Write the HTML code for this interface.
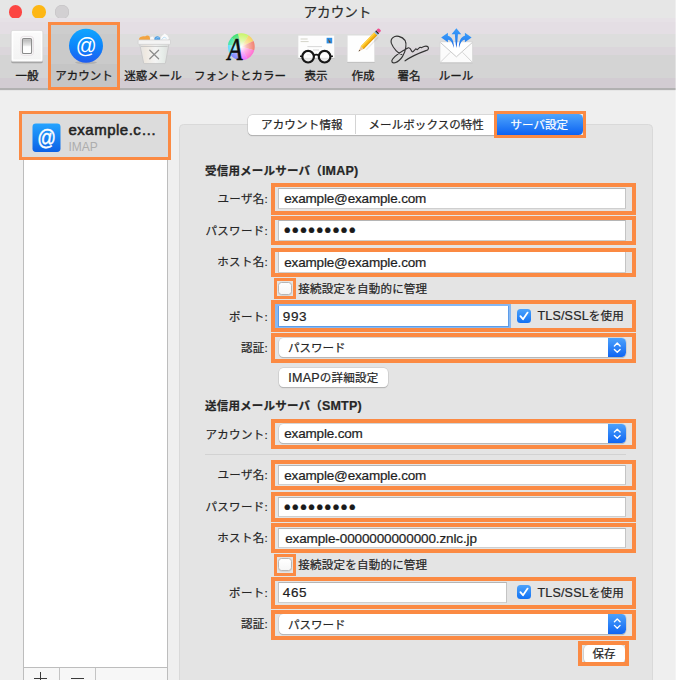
<!DOCTYPE html>
<html lang="ja">
<head>
<meta charset="utf-8">
<title>アカウント</title>
<style>
html,body{margin:0;padding:0}
body{width:676px;height:680px;position:relative;overflow:hidden;background:#efefef;
 font-family:"Liberation Sans","Noto Sans CJK JP",sans-serif;font-size:11.5px;color:#262626;-webkit-text-stroke:.22px}
.a{position:absolute;box-sizing:border-box}
.t{position:absolute;white-space:nowrap;line-height:16px;height:16px}
.l{font-size:12.5px}
.or{position:absolute;box-sizing:border-box;border:4px solid #fb8a43}
.fld{position:absolute;box-sizing:border-box;background:#fff;border:1px solid #c4c4c4;border-top-color:#b5b5b5;border-bottom-color:#cfcfcf;height:22px}
.ft{position:absolute;white-space:nowrap;font-size:13.5px;line-height:20px;left:5.7px;top:.9px;color:#1e1e1e;letter-spacing:-.16px}
.dots{position:absolute;white-space:nowrap;font-size:20px;line-height:19px;left:5.2px;top:0;color:#1a1a1a;letter-spacing:1.12px}
.lab{position:absolute;white-space:nowrap;line-height:16px;height:16px;text-align:right;width:100px;left:168px;letter-spacing:.3px}
.pop{position:absolute;box-sizing:border-box;background:#fff;border-radius:4.5px;height:20px;box-shadow:0 0 0 .5px #c6c6c6,0 1px 1px rgba(0,0,0,.28)}
.step{position:absolute;right:0;top:0;width:18.5px;height:100%;border-radius:0 4.5px 4.5px 0;background:linear-gradient(#4da2fb,#0f65f3)}
.cb{position:absolute;box-sizing:border-box;width:14px;height:13px;border-radius:3.5px;background:linear-gradient(#fff,#f6f6f6);border:1px solid #b6b6b6;box-shadow:0 .5px .5px rgba(0,0,0,.12)}
.cbon{position:absolute;box-sizing:border-box;width:14px;height:14px;border-radius:3.5px;background:linear-gradient(#4ca3fb,#1171f4)}
.btn{position:absolute;box-sizing:border-box;background:#fff;border-radius:4.5px;box-shadow:0 0 0 .5px #c4c4c4,0 1px 1px rgba(0,0,0,.28)}
.tl{position:absolute;top:5px;width:13.5px;height:13.5px;border-radius:50%}
.tbl{position:absolute;white-space:nowrap;line-height:16px;height:16px;top:68px;text-align:center;color:#1c1c1c;-webkit-text-stroke:.3px}
</style>
</head>
<body>

<!-- title bar -->
<div class="a" style="left:0;top:0;width:676px;height:22px;background:#e6e6e6"></div>
<div class="tl" style="left:8.5px;background:#fc4643"></div>
<div class="tl" style="left:32px;background:#fdb714"></div>
<div class="tl" style="left:55.2px;background:#d2d0d2;box-shadow:inset 0 0 0 .5px #c2c0c2"></div>
<div class="t" style="left:303.5px;top:3.6px;font-size:13.6px;line-height:18px;height:18px;color:#2b2b2b">アカウント</div>

<!-- toolbar -->
<div class="a" style="left:0;top:17.5px;width:676px;height:70px;background:linear-gradient(#e6e1e6 0,#e6e1e6 3.5px,#e4dee4 3.5px,#e4dee4 15.5px,#dddddd 15.5px,#dddddd 29.5px,#dbd6db 29.5px,#dbd6db 37.5px,#d4d4d4 37.5px,#d4d4d4 60.5px,#d2ccd2 60.5px,#d2ccd2 70px)"></div>
<div class="a" style="left:0;top:87.5px;width:676px;height:2px;background:#b1b1b1"></div>
<div class="a" style="left:0;top:89.5px;width:676px;height:1px;background:#e6e6e6"></div>

<!-- selected toolbar item -->
<div class="a" style="left:50px;top:24px;width:68px;height:64px;background:linear-gradient(#cdcdcd 0,#cdcdcd 10px,#cacaca 10px,#cacaca 40px,#c5c5c5 40px,#c5c5c5 64px)"></div>

<!-- icon: general -->
<svg class="a" style="left:9px;top:28px" width="37" height="38" viewBox="0 0 37 38">
 <defs>
  <linearGradient id="g1" x1="0" y1="0" x2="0" y2="1"><stop offset="0" stop-color="#fbfbfb"/><stop offset="1" stop-color="#f3f3f3"/></linearGradient>
  <linearGradient id="g1b" x1="0" y1="0" x2="0" y2="1"><stop offset="0" stop-color="#f4f4f4"/><stop offset=".08" stop-color="#b9b9b9"/><stop offset=".45" stop-color="#e6e6e6"/><stop offset=".55" stop-color="#fdfdfd"/><stop offset="1" stop-color="#ffffff"/></linearGradient>
 </defs>
 <rect x="2.1" y="3.6" width="31.8" height="31.6" rx="1.6" fill="#8f8f8f" opacity=".7"/>
 <rect x="2.1" y="2.4" width="31.8" height="31.2" rx="1.6" fill="url(#g1)" stroke="#d6d6d6" stroke-width=".7"/>
 <rect x="3.6" y="3.9" width="28.8" height="28.2" rx=".8" fill="none" stroke="#ffffff" stroke-width="1.4"/>
 <rect x="11.7" y="8.4" width="12.8" height="18.9" rx="2.8" fill="#fbfbfb" stroke="#e3dbe0" stroke-width=".8"/>
 <rect x="13.4" y="10.5" width="9.2" height="15" rx="1.3" fill="url(#g1b)" stroke="#8a8a8a" stroke-width="1.1"/>
</svg>
<div class="tbl" style="left:7px;width:40px">一般</div>

<!-- icon: account -->
<svg class="a" style="left:66px;top:26px" width="40" height="40" viewBox="0 0 40 40">
 <defs>
  <linearGradient id="g2" x1="0" y1="0" x2="0" y2="1"><stop offset="0" stop-color="#10a6ff"/><stop offset=".5" stop-color="#0c86fb"/><stop offset="1" stop-color="#1f5cf0"/></linearGradient>
 </defs>
 <ellipse cx="20" cy="36.6" rx="11" ry="1.6" fill="#000" opacity=".12"/>
 <circle cx="20" cy="19.8" r="17" fill="url(#g2)"/>
 <text transform="translate(20.2,26.6) scale(.92,1)" x="0" y="0" text-anchor="middle" font-family="Liberation Sans, sans-serif" font-size="22.5" fill="#fff">@</text>
</svg>
<div class="tbl" style="left:54px;width:60px">アカウント</div>

<!-- icon: junk -->
<svg class="a" style="left:134px;top:28px" width="40" height="38" viewBox="0 0 40 38">
 <defs>
  <linearGradient id="g3" x1="0" y1="0" x2="1" y2="0"><stop offset="0" stop-color="#e3e3e3"/><stop offset=".2" stop-color="#efe9e1"/><stop offset=".55" stop-color="#f4f4f4"/><stop offset=".8" stop-color="#e6ece8"/><stop offset="1" stop-color="#dedede"/></linearGradient>
 </defs>
 <path d="M5 11.9 C5 9 8 8.2 11 8.4 C12.5 7.2 14.5 7.2 15.6 8.6 L16.2 12 Z" fill="#f3a440"/>
 <path d="M15.8 12 L16.6 9 L19 8.6 L20.6 12 Z" fill="#fafafa"/>
 <path d="M20.4 12 C20 9.4 22 7.8 23.8 8.2 C25.6 8.4 26.6 10 26.2 12 Z" fill="#4f9fe4"/>
 <path d="M22.2 10.6 C22.8 9.4 24.2 9.2 24.8 10 " fill="none" stroke="#9bcdf3" stroke-width=".9"/>
 <path d="M26.2 12 L27.4 8.6 L30.6 5.6 L33.4 7.6 L34.8 10 L34.4 12 Z" fill="#fbfbfb"/>
 <path d="M27.6 11.6 L30 9 L32.6 10.4" fill="none" stroke="#b9def6" stroke-width=".9"/>
 <path d="M5.6 15.6 H35 L31.4 35.2 Q31.3 35.6 30.8 35.6 H10.3 Q9.8 35.6 9.7 35.2 Z" fill="url(#g3)" stroke="#c4c4c4" stroke-width=".8"/>
 <path d="M7 18.4 H33.6" stroke="#bdbdbd" stroke-width="1" opacity=".8"/>
 <rect x="4.1" y="11.9" width="32.4" height="4.5" rx=".8" fill="#f4f4f4" stroke="#cdcdcd" stroke-width=".7"/>
 <path d="M15.8 22.2 L24.6 30.8 M24.6 22.2 L15.8 30.8" stroke="#8c8c8c" stroke-width="1.25" fill="none" stroke-linecap="round"/>
</svg>
<div class="tbl" style="left:118px;width:70px">迷惑メール</div>

<!-- icon: fonts & colours -->
<svg class="a" style="left:222px;top:30px" width="38" height="34" viewBox="0 0 38 34">
 <defs>
  <radialGradient id="g4w" cx=".5" cy=".5" r=".5"><stop offset="0" stop-color="#fff" stop-opacity="1"/><stop offset=".45" stop-color="#fff" stop-opacity=".45"/><stop offset="1" stop-color="#fff" stop-opacity="0"/></radialGradient>
  <clipPath id="c4"><circle cx="19.3" cy="16.7" r="13.4"/></clipPath>
 </defs>
 <g clip-path="url(#c4)">
  <path d="M19.3 16.7 L15 0 L30 0 Z" fill="#c9f56a"/>
  <path d="M19.3 16.7 L30 0 L38 8 Z" fill="#f6d260"/>
  <path d="M19.3 16.7 L38 8 L38 22 Z" fill="#f28070"/>
  <path d="M19.3 16.7 L38 22 L28 34 Z" fill="#ff70d0"/>
  <path d="M19.3 16.7 L28 34 L16 34 Z" fill="#f070ff"/>
  <path d="M19.3 16.7 L16 34 L2 30 Z" fill="#7d84ff"/>
  <path d="M19.3 16.7 L2 30 L0 14 Z" fill="#62dcff"/>
  <path d="M19.3 16.7 L0 14 L4 2 Z" fill="#3fe6a6"/>
  <path d="M19.3 16.7 L4 2 L15 0 Z" fill="#3fe070"/>
  <circle cx="19.3" cy="16.7" r="13.4" fill="url(#g4w)"/>
 </g>
 <text transform="translate(5.6,30.2) scale(.77,1)" x="0" y="0" font-family="Liberation Serif, serif" font-style="italic" font-size="32" fill="#0d0d0d" stroke="#0d0d0d" stroke-width=".7">A</text>
</svg>
<div class="tbl" style="left:190px;width:100px">フォントとカラー</div>

<!-- icon: viewing -->
<svg class="a" style="left:295px;top:32px" width="42" height="34" viewBox="0 0 42 34">
 <rect x="3" y="4.2" width="36.7" height="22.6" fill="#9a9a9a" opacity=".5"/>
 <rect x="3" y="3.2" width="36.7" height="22.8" fill="#fdfdfd" stroke="#dddddd" stroke-width=".7"/>
 <rect x="31.6" y="5.8" width="5.6" height="5.6" fill="#2b8fe6"/>
 <path d="M33 6.6 L36 10.6 L34 10.8 Z" fill="#7a4a20"/>
 <path d="M5.6 7 h7 M5.6 9.6 h8" stroke="#d3d3c8" stroke-width="1"/>
 <path d="M12.4 14.6 h14.6 M18 18 h6 M12 22.8 h4" stroke="#d2d2d2" stroke-width=".9"/>
 <circle cx="13.1" cy="24.7" r="5.8" fill="#fff" fill-opacity=".5" stroke="#161616" stroke-width="2.2"/>
 <circle cx="29.6" cy="24.7" r="5.8" fill="#fff" fill-opacity=".5" stroke="#161616" stroke-width="2.2"/>
 <path d="M18.6 23.6 Q21.3 21.6 24 23.6" fill="none" stroke="#161616" stroke-width="1.6"/>
 <path d="M7.6 24.3 L5 24.3 M35.2 24.3 L37.9 24.3" stroke="#161616" stroke-width="1.5"/>
</svg>
<div class="tbl" style="left:296px;width:40px">表示</div>

<!-- icon: composing -->
<svg class="a" style="left:344px;top:26px" width="40" height="40" viewBox="0 0 40 40">
 <rect x="3.2" y="10.2" width="27.4" height="26.8" fill="#9a9a9a" opacity=".55"/>
 <rect x="3.2" y="9.2" width="27.4" height="26.8" fill="#fefefe" stroke="#e1e1e1" stroke-width=".6"/>
 <g transform="translate(14.5,25.6) rotate(-46)">
  <path d="M6 3.6 L24 3.6 L24 5 L7 5 Z" fill="#000" opacity=".08"/>
  <path d="M0 0 L5.4 -2 L5.4 2 Z" fill="#ecc79a"/>
  <path d="M0 0 L1.9 -.7 L1.9 .7 Z" fill="#5a4636"/>
  <rect x="5.4" y="-2" width="19.4" height="4" fill="#fbb913"/>
  <rect x="5.4" y="-2" width="19.4" height="1.3" fill="#ffd24a"/>
  <rect x="5.4" y=".9" width="19.4" height="1.1" fill="#df9a10"/>
  <rect x="24.8" y="-2" width="1.4" height="4" fill="#7db4e8"/>
  <rect x="26.2" y="-2" width="1.4" height="4" fill="#222"/>
  <rect x="27.6" y="-2" width="3.2" height="4" rx="1.1" fill="#f0508e"/>
 </g>
</svg>
<div class="tbl" style="left:343px;width:40px">作成</div>

<!-- icon: signature -->
<svg class="a" style="left:388px;top:30px" width="44" height="36" viewBox="0 0 44 36">
 <path d="M 13.8,24.5 C 10.1,23.7 5.6,18.9 3.4,13.4 C 1.9,8.6 6.4,5.2 10.8,6.4 C 15.2,7.5 18.9,10.8 17.8,17.4 C 17.1,23.4 13.0,30.8 7.1,32.8 C 4.1,33.4 3.0,31.5 4.5,29.3 C 7.1,25.6 14.5,20.8 20.4,17.8 C 21.9,17.4 22.6,18.9 23.5,20.8 C 24.0,21.9 24.5,22.3 25.6,21.1 L 27.8,18.9 C 28.5,18.6 28.5,20.0 29.3,19.7 L 31.5,17.6 C 32.6,17.1 33.0,17.8 33.7,17.6 C 35.9,16.3 38.9,15.6 40.2,17.1 C 40.7,18.2 40.4,19.3 39.6,20.0 C 34.5,21.9 25.6,24.8 17.1,30.8" fill="none" stroke="#333" stroke-width="1.15" stroke-linecap="round" stroke-linejoin="round"/>
</svg>
<div class="tbl" style="left:389px;width:40px">署名</div>

<!-- icon: rules -->
<svg class="a" style="left:436px;top:26px" width="42" height="40" viewBox="0 0 42 40">
 <defs>
  <linearGradient id="g8" x1="0" y1="0" x2="0" y2="1"><stop offset="0" stop-color="#3a9cfb"/><stop offset=".55" stop-color="#2a86f2"/><stop offset="1" stop-color="#1757cf"/></linearGradient>
 </defs>
 <rect x="4" y="17" width="32.7" height="20.2" fill="#9a9a9a" opacity=".5"/>
 <rect x="4" y="16" width="32.7" height="20.4" fill="#fbfbfb" stroke="#d4d4d4" stroke-width=".7"/>
 <path d="M4.4 36.2 L14.2 26.4 M36.3 36.2 L26.6 26.4" stroke="#d0d0d0" stroke-width=".9" fill="none"/>
 <path d="M4.4 16.5 L20.4 30.8 L36.3 16.5" fill="#ffffff" stroke="#c4c4c4" stroke-width=".9"/>
 <path d="M20.4 2.3 L25.2 8.3 L21.9 8.3 C21.7 13 21.2 18 20.4 21.9 C19.6 18 19.1 13 18.9 8.3 L15.6 8.3 Z" fill="url(#g8)"/>
 <path d="M5.2 11.5 L11.9 6.7 L11.9 9.8 C16 10.8 18.2 15.6 17.8 21.9 C16.6 17.2 15.2 14.4 11.9 13.8 L11.9 16.3 Z" fill="url(#g8)"/>
 <path d="M35.6 11.5 L28.9 6.7 L28.9 9.8 C24.8 10.8 22.6 15.6 23 21.9 C24.2 17.2 25.6 14.4 28.9 13.8 L28.9 16.3 Z" fill="url(#g8)"/>
</svg>
<div class="tbl" style="left:431px;width:50px">ルール</div>

<div class="or" style="left:48px;top:22px;width:72px;height:68px;border-width:3px"></div>

<!-- sidebar -->
<div class="a" style="left:23px;top:113px;width:145px;height:567px;background:#fff;border:1px solid #bdbdbd;border-bottom:0"></div>
<div class="a" style="left:22px;top:113px;width:147px;height:46px;background:#dcdcdc"></div>
<svg class="a" style="left:32px;top:122.5px" width="29" height="30" viewBox="0 0 29 30">
 <defs>
  <linearGradient id="g9" x1="0" y1="0" x2="0" y2="1"><stop offset="0" stop-color="#25a4ff"/><stop offset="1" stop-color="#0b61e6"/></linearGradient>
 </defs>
 <rect x=".5" y=".5" width="28" height="28.4" rx="3.4" fill="url(#g9)"/>
 <text transform="translate(14.6,21.6) scale(.86,1)" x="0" y="0" text-anchor="middle" font-family="Liberation Sans, sans-serif" font-size="21.5" fill="#fff" stroke="#fff" stroke-width=".45">@</text>
</svg>
<div class="t" style="left:68.5px;top:120px;font-size:15px;font-weight:400;line-height:20px;height:20px;color:#232323;letter-spacing:.5px;-webkit-text-stroke:.55px">example.c…</div>
<div class="t" style="left:68.5px;top:139px;font-size:12px;line-height:16px;color:#adadad;-webkit-text-stroke:0">IMAP</div>
<div class="or" style="left:19px;top:111px;width:152px;height:49px;border-width:3px"></div>
<!-- +/- -->
<div class="a" style="left:23px;top:667px;width:145px;height:13px;background:#f7f7f7;border-top:1px solid #bdbdbd;border-left:1px solid #bdbdbd;border-right:1px solid #bdbdbd"></div>
<div class="a" style="left:59px;top:668px;width:1px;height:12px;background:#c4c4c4"></div>
<div class="a" style="left:95px;top:668px;width:1px;height:12px;background:#c4c4c4"></div>
<div class="a" style="left:40px;top:672px;width:1px;height:8px;background:#3a3a3a"></div>
<div class="a" style="left:34px;top:678px;width:13px;height:1px;background:#3a3a3a"></div>
<div class="a" style="left:71px;top:678px;width:13px;height:1px;background:#3a3a3a"></div>

<!-- group box -->
<div class="a" style="left:178.5px;top:124px;width:474px;height:570px;background:#e4e4e4;border:1px solid #d9d9d9;border-radius:4.5px"></div>

<!-- tabs -->
<div class="a" style="left:248px;top:114.5px;width:334px;height:20px;background:#fff;border-radius:4.5px;box-shadow:0 0 0 .5px #c2c2c2,0 1px 1px rgba(0,0,0,.3)"></div>
<div class="a" style="left:355px;top:115px;width:1px;height:19px;background:#d4d4d4"></div>
<div class="a" style="left:496.5px;top:114px;width:86px;height:21px;border-radius:0 4.5px 4.5px 0;background:linear-gradient(#4fa5fc,#0b62f2)"></div>
<div class="t" style="left:261px;top:116.5px;letter-spacing:.18px">アカウント情報</div>
<div class="t" style="left:368.5px;top:116.5px;letter-spacing:.08px">メールボックスの特性</div>
<div class="t" style="left:510.5px;top:116.5px;color:#fff">サーバ設定</div>
<div class="or" style="left:494px;top:111px;width:92px;height:27px;border-width:3px"></div>

<!-- IMAP section -->
<div class="t" style="left:205px;top:162.5px;font-weight:700;letter-spacing:.2px">受信用メールサーバ（<span class="l">IMAP)</span></div>

<div class="lab" style="top:190.5px">ユーザ名:</div>
<div class="fld" style="left:277.5px;top:187.5px;width:348.5px;height:21.8px"><span class="ft">example@example.com</span></div>
<div class="or" style="left:271px;top:183px;width:365px;height:31.8px"></div>

<div class="lab" style="top:222.5px">パスワード:</div>
<div class="fld" style="left:277.5px;top:220.2px;width:348.5px;height:20.5px"><span class="dots">•••••••••</span></div>
<div class="or" style="left:271px;top:216px;width:365px;height:29.4px"></div>

<div class="lab" style="top:254px">ホスト名:</div>
<div class="fld" style="left:277.5px;top:251.4px;width:348.5px;height:21.3px"><span class="ft">example@example.com</span></div>
<div class="or" style="left:271px;top:247.6px;width:365px;height:29.2px"></div>

<div class="cb" style="left:278px;top:282px"></div>
<div class="t" style="left:298.3px;top:281px;letter-spacing:.23px">接続設定を自動的に管理</div>
<div class="or" style="left:274.1px;top:278px;width:21.8px;height:20.9px;border-width:3px"></div>

<div class="lab" style="top:308.8px">ポート:</div>
<div class="a" style="left:275px;top:303.8px;width:236px;height:24.4px;background:#86b8f3"></div>
<div class="a" style="left:278.2px;top:305.6px;width:230.6px;height:21.6px;background:#5c9ce9"></div>
<div class="a" style="left:279px;top:306.3px;width:229.2px;height:20.2px;background:#fff"><span class="ft" style="left:3.8px;line-height:20.6px;letter-spacing:.6px">993</span></div>
<div class="cbon" style="left:517px;top:308.6px"></div>
<svg class="a" style="left:517px;top:308.6px" width="14" height="14" viewBox="0 0 14 14"><path d="M3.4 7.2 L6 10.2 L10.6 3.6" fill="none" stroke="#fff" stroke-width="1.8" stroke-linecap="round" stroke-linejoin="round"/></svg>
<div class="t" style="left:537.4px;top:308.3px;letter-spacing:.2px"><span class="l">TLS/SSL</span>を使用</div>
<div class="or" style="left:271px;top:300.3px;width:365px;height:31.4px"></div>

<div class="lab" style="top:339.5px">認証:</div>
<div class="pop" style="left:278.5px;top:337.8px;width:347.5px;height:19.4px"><span class="t" style="left:9.5px;top:2.2px">パスワード</span><div class="step"></div>
 <svg class="a" style="right:0;top:0" width="18.5" height="19.4" viewBox="0 0 18.5 19.4"><path d="M6.4 7.9 L9.25 5.1 L12.1 7.9 M6.4 11.5 L9.25 14.3 L12.1 11.5" fill="none" stroke="#fff" stroke-width="1.4" stroke-linecap="round" stroke-linejoin="round"/></svg></div>
<div class="or" style="left:271px;top:333px;width:365px;height:29.7px"></div>

<div class="btn" style="left:278.5px;top:367.7px;width:109.5px;height:19.4px"><span class="t" style="left:9.8px;top:2.6px;letter-spacing:.25px"><span class="l">IMAP</span>の詳細設定</span></div>

<!-- SMTP section -->
<div class="t" style="left:205px;top:398px;font-weight:700;letter-spacing:.2px">送信用メールサーバ（<span class="l">SMTP)</span></div>

<div class="lab" style="top:426.5px">アカウント:</div>
<div class="pop" style="left:278.5px;top:423.8px;width:347.5px;height:19.5px"><span class="ft" style="left:5.7px;top:0;line-height:20px">example.com</span><div class="step"></div>
 <svg class="a" style="right:0;top:0" width="18.5" height="19.5" viewBox="0 0 18.5 19.4"><path d="M6.4 7.9 L9.25 5.1 L12.1 7.9 M6.4 11.5 L9.25 14.3 L12.1 11.5" fill="none" stroke="#fff" stroke-width="1.4" stroke-linecap="round" stroke-linejoin="round"/></svg></div>
<div class="or" style="left:271px;top:419.2px;width:365px;height:29.6px"></div>

<div class="a" style="left:204.5px;top:453.5px;width:421.5px;height:1px;background:#d2d2d2"></div>

<div class="lab" style="top:467px">ユーザ名:</div>
<div class="fld" style="left:277.5px;top:464.6px;width:348.5px;height:20.8px"><span class="ft">example@example.com</span></div>
<div class="or" style="left:271px;top:460px;width:365px;height:30px"></div>

<div class="lab" style="top:499px">パスワード:</div>
<div class="fld" style="left:277.5px;top:496.5px;width:348.5px;height:20.3px"><span class="dots">•••••••••</span></div>
<div class="or" style="left:271px;top:492.2px;width:365px;height:29.4px"></div>

<div class="lab" style="top:530px">ホスト名:</div>
<div class="fld" style="left:277.5px;top:527.5px;width:348.5px;height:20.8px"><span class="ft" style="left:6.7px;letter-spacing:-.12px">example-0000000000000.znlc.jp</span></div>
<div class="or" style="left:271px;top:523.2px;width:365px;height:29.4px"></div>

<div class="cb" style="left:278px;top:558px"></div>
<div class="t" style="left:298.3px;top:557.4px;letter-spacing:.23px">接続設定を自動的に管理</div>
<div class="or" style="left:274.1px;top:554px;width:21.8px;height:21.7px;border-width:3px"></div>

<div class="lab" style="top:584.8px">ポート:</div>
<div class="fld" style="left:278px;top:581.5px;width:228.5px;height:21.6px"><span class="ft" style="left:3.8px;letter-spacing:.6px">465</span></div>
<div class="cbon" style="left:517px;top:585.3px"></div>
<svg class="a" style="left:517px;top:585.3px" width="14" height="14" viewBox="0 0 14 14"><path d="M3.4 7.2 L6 10.2 L10.6 3.6" fill="none" stroke="#fff" stroke-width="1.8" stroke-linecap="round" stroke-linejoin="round"/></svg>
<div class="t" style="left:537.4px;top:584.8px;letter-spacing:.2px"><span class="l">TLS/SSL</span>を使用</div>
<div class="or" style="left:271px;top:577.1px;width:365px;height:31.5px"></div>

<div class="lab" style="top:616.3px">認証:</div>
<div class="pop" style="left:278.5px;top:614.4px;width:347.5px;height:19.2px"><span class="t" style="left:9.5px;top:2.2px">パスワード</span><div class="step"></div>
 <svg class="a" style="right:0;top:0" width="18.5" height="19.2" viewBox="0 0 18.5 19.4"><path d="M6.4 7.9 L9.25 5.1 L12.1 7.9 M6.4 11.5 L9.25 14.3 L12.1 11.5" fill="none" stroke="#fff" stroke-width="1.4" stroke-linecap="round" stroke-linejoin="round"/></svg></div>
<div class="or" style="left:271px;top:610px;width:365px;height:29.6px"></div>

<div class="btn" style="left:583.5px;top:645px;width:41.5px;height:17.5px"><span class="t" style="left:9px;top:.8px">保存</span></div>
<div class="or" style="left:578.3px;top:641.2px;width:50.7px;height:24.4px;border-width:4px"></div>

<!-- window right edge -->
<div class="a" style="left:674.5px;top:0;width:1.5px;height:680px;background:rgba(255,255,255,.35)"></div>
</body>
</html>
